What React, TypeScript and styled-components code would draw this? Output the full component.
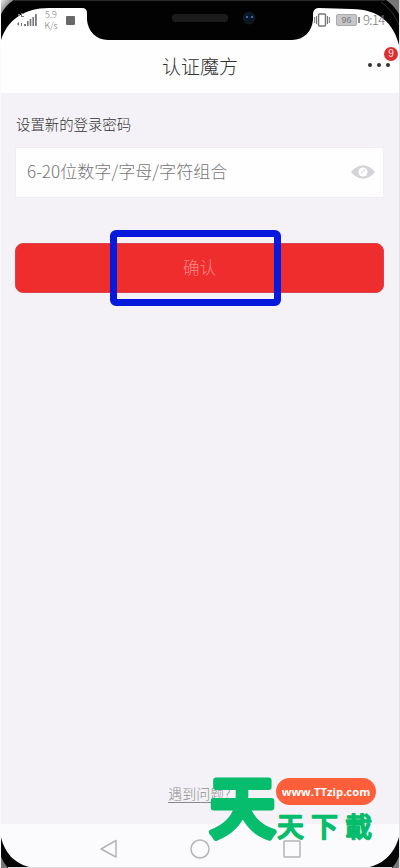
import React from "react";
import styled, { createGlobalStyle } from "styled-components";

const Global = createGlobalStyle`
  * { box-sizing: border-box; }
  body { margin: 0; background: #f4f2f6; }
`;

const Phone = styled.div`
  position: relative;
  display: flex;
  flex-direction: column;
  width: 400px;
  height: 868px;
  overflow: hidden;
  background: #f4f2f6;
  border-left: 1px solid #faf9fb;
  border-right: 1px solid #e4e3e7;
  font-family: "Noto Sans CJK SC", sans-serif;
  font-weight: 300;
`;

const Bezel = styled.svg`
  position: absolute;
  left: -1px;
  top: 0;
  z-index: 2;
  pointer-events: none;
`;

const StatusBar = styled.header`
  display: flex;
  justify-content: space-between;
  height: 41px;
  flex: none;
  padding: 9px 13px 0 15px;
  background: #fff;
  color: #777;
`;

const StatusGroup = styled.div<{ $gap: number }>`
  position: relative;
  z-index: 3;
  display: flex;
  align-items: center;
  gap: ${(p) => p.$gap}px;
  height: 22px;
`;

const Speed = styled.div`
  display: flex;
  flex-direction: column;
  width: 14px;
  font: 300 9px/11px "Noto Sans CJK SC", sans-serif;
  text-align: center;
  white-space: nowrap;
`;

const Recording = styled.div`
  width: 9px;
  height: 9px;
  margin-left: 3px;
  border-radius: 1px;
  background: #686868;
`;

const Battery = styled.div`
  position: relative;
  width: 21px;
  height: 12px;
  border: 1px solid #aaa;
  border-radius: 2px;
  background: #c7c6c8;
  color: #777;
  font: 400 9px/10px "Liberation Sans", sans-serif;
  text-align: center;
  &::after {
    content: "";
    position: absolute;
    right: -4px;
    top: 2px;
    width: 2px;
    height: 6px;
    background: #888;
  }
`;

const Clock = styled.span`
  width: 23px;
  font-size: 13px;
  line-height: 16px;
  letter-spacing: -0.6px;
  white-space: nowrap;
`;

const TitleBar = styled.div`
  position: relative;
  display: flex;
  align-items: center;
  justify-content: center;
  height: 52px;
  flex: none;
  background: #fefefe;
`;

const Title = styled.h1`
  margin: 0 0 3px;
  color: #303030;
  font-size: 19px;
  font-weight: 300;
  line-height: 28px;
`;

const More = styled.div`
  position: absolute;
  right: 9px;
  top: 22px;
  display: flex;
  gap: 5px;
`;

const Dot = styled.i`
  width: 4px;
  height: 4px;
  border-radius: 50%;
  background: #333;
`;

const Badge = styled.span`
  position: absolute;
  right: 1px;
  top: 6px;
  width: 14px;
  height: 14px;
  border-radius: 50%;
  background: #df2d32;
  color: #ffe3e3;
  font: 400 10px/14px "Liberation Sans", sans-serif;
  text-align: center;
`;

const Content = styled.main`
  display: flex;
  flex: 1;
  flex-direction: column;
  padding: 20px 15px 0 14px;
`;

const Label = styled.label`
  padding-left: 1px;
  color: #333;
  font-size: 14.4px;
  line-height: 22px;
`;

const Field = styled.div`
  display: flex;
  align-items: center;
  justify-content: space-between;
  height: 51px;
  margin: 12px 0 0;
  padding: 0 8px 2px 11px;
  border: 1px solid #efedf0;
  background: #fefefe;
`;

const Placeholder = styled.span`
  margin-bottom: 2px;
  color: #777;
  font-size: 17.1px;
  white-space: nowrap;
`;

const Confirm = styled.button`
  position: relative;
  height: 50px;
  margin: 45px 0 0;
  padding: 0 0 3px;
  border: 1px solid #d54450;
  border-radius: 8px;
  background: #ef2d2d;
  color: #f78686;
  font: 300 16.5px/24px "Noto Sans CJK SC", sans-serif;
`;

const Highlight = styled.span`
  position: absolute;
  left: 94px;
  top: -14px;
  width: 171px;
  height: 76px;
  border: 7px solid #0719dc;
  border-radius: 6px;
`;

const Help = styled.a`
  align-self: center;
  margin: auto 0 21px;
  color: #909090;
  font-size: 14px;
  line-height: 18px;
  border-bottom: 1px solid #888;
  white-space: nowrap;
`;

const NavBar = styled.nav`
  display: flex;
  align-items: center;
  gap: 72px;
  height: 44px;
  flex: none;
  padding: 6px 0 0 97px;
  background: #fbfafd;
`;

const Watermark = styled.div`
  position: absolute;
  left: 206px;
  top: 773px;
  z-index: 4;
  display: flex;
  width: 170px;
  height: 70px;
`;

const MarkGlyphs = styled.svg`
  display: block;
  flex: none;
  overflow: visible;
  fill: #06bd6d;
  stroke: #06bd6d;
  stroke-linejoin: round;
  font-family: "Noto Sans CJK TC", sans-serif;
  font-weight: 500;
`;

const MarkDetails = styled.div`
  display: flex;
  flex-direction: column;
  width: 100px;
  margin-left: -1px;
`;

const SiteAddress = styled.div`
  width: 100px;
  height: 27px;
  margin: 5px 0 6px;
  border-radius: 14px;
  background: #ff5e3a;
  color: #fff;
  font: 700 11.3px/28px "Open Sans", sans-serif;
  text-align: center;
  white-space: nowrap;
`;

function SignalIcon() {
  return (
    <svg width="23" height="16" viewBox="0 0 23 16" fill="#777">
      <path d="M2 2h2v2H2zm3-1h3v1H6v2h2v1H5zM1 12l2-2v4zm4-1h1v3H5zm3 1h2v2H8zm3-3h1.6v5H11zm2.7-2h1.6v7h-1.6zm2.7-2h1.6v9h-1.6zM19 2h1.8v12H19z" />
    </svg>
  );
}

function VibrateIcon() {
  return (
    <svg width="16" height="14" viewBox="0 0 16 14" fill="none" stroke="#777">
      <rect x="4.5" y="1" width="7" height="12" rx="1" strokeWidth="1.5" />
      <path d="M2.5 3v8M.7 4v6M13.5 3v8M15.3 4v6" />
    </svg>
  );
}

function EyeIcon() {
  return (
    <svg width="24" height="16" viewBox="0 0 24 16">
      <path d="M0 8C7-1 17-1 24 8 17 17 7 17 0 8Z" fill="#d4d3d7" />
      <circle cx="12" cy="8" r="4.6" fill="#fff" />
      <path d="M10 9.5l4-4" fill="none" stroke="#dedde1" strokeWidth="1.2" />
    </svg>
  );
}

function PhoneBezel() {
  return (
    <Bezel width="400" height="868" viewBox="0 0 400 868">
      <defs>
        <linearGradient id="edge" x1="0" y1="0" x2="1" y2="1">
          <stop offset="0" stopColor="#eee" />
          <stop offset=".55" stopColor="#777" />
          <stop offset="1" stopColor="#111" />
        </linearGradient>
      </defs>
      <path d="M0 0H400V50C396 26 381 9 352 9L319 8Q314 8 313 13V20C312 31 304 40 292 40H108C96 40 88 31 87 20V13Q87 8 82 8H49C22 8 5 22 0 44Z" fill="#020202" />
      <path d="M0 0H14Q4 6 0 17Z" fill="url(#edge)" />
      <path d="M386 0H400V16Q395 6 386 0Z" fill="#777" />
      <path d="M381 2Q393 10 399 25" fill="none" stroke="#303030" />
      <path d="M14 .5H385" stroke="#292929" />
      <rect x="172" y="14" width="56" height="8" rx="3" fill="#1b1b1b" />
      <circle cx="249" cy="18" r="6.5" fill="#11161d" />
      <circle cx="249" cy="17" r="4" fill="#07192f" />
      <path d="M246 17h2m3 0h2" stroke="#416999" strokeWidth="2" />
      <path d="M0 832C3 852 15 866 36 868H0Z" fill="#050505" />
      <path d="M400 832C397 851 384 866 364 868H400Z" fill="#050505" />
      <path d="M0 854Q3 863 8 868H0ZM400 854Q397 863 392 868H400Z" fill="#777" />
      <path d="M8 867.5H392" stroke="#dedde0" />
    </Bezel>
  );
}

export default function App() {
  return (
    <>
      <Global />
      <Phone>
        <StatusBar>
          <StatusGroup $gap={5}>
            <SignalIcon />
            <Speed><span>5.9</span><span>K/s</span></Speed>
            <Recording />
          </StatusGroup>
          <StatusGroup $gap={6}>
            <VibrateIcon />
            <Battery>96</Battery>
            <Clock>9:14</Clock>
          </StatusGroup>
        </StatusBar>
        <TitleBar>
          <Title>认证魔方</Title>
          <More><Dot /><Dot /><Dot /></More>
          <Badge>9</Badge>
        </TitleBar>
        <Content>
          <Label>设置新的登录密码</Label>
          <Field>
            <Placeholder>6-20位数字/字母/字符组合</Placeholder>
            <EyeIcon />
          </Field>
          <Confirm>确认<Highlight /></Confirm>
          <Help>遇到问题?</Help>
        </Content>
        <NavBar>
          <svg width="20" height="20" viewBox="0 0 20 20" fill="none" stroke="#b5b4b9" strokeWidth="1.5"><path d="M18 1.5V18L3 10Z" strokeLinejoin="round" /></svg>
          <svg width="20" height="20" viewBox="0 0 20 20" fill="none" stroke="#b5b4b9" strokeWidth="1.5"><circle cx="10" cy="10" r="9" /></svg>
          <svg width="20" height="20" viewBox="0 0 20 20" fill="none" stroke="#b5b4b9" strokeWidth="1.5"><rect x="2" y="2" width="16" height="16" rx=".5" /></svg>
        </NavBar>
        <PhoneBezel />
        <Watermark>
          <MarkGlyphs width="70" height="70" fontSize="66" strokeWidth="6">
            <text x="2.5" y="58.5">天</text>
          </MarkGlyphs>
          <MarkDetails>
            <SiteAddress>www.TTzip.com</SiteAddress>
            <MarkGlyphs width="98" height="30" fontSize="27" strokeWidth="1.5">
              <text x="1" y="26">天</text>
              <text x="35" y="26">下</text>
              <text x="69" y="26">載</text>
            </MarkGlyphs>
          </MarkDetails>
        </Watermark>
      </Phone>
    </>
  );
}
